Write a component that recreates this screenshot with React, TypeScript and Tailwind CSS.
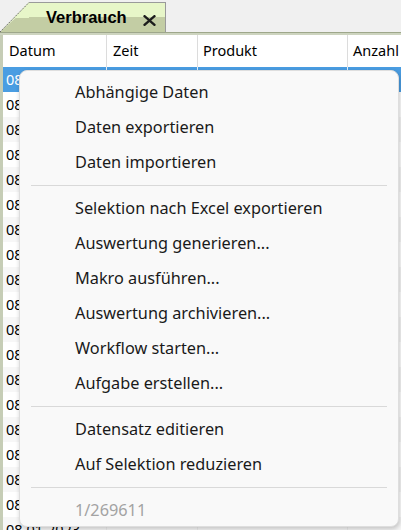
import { Fragment } from 'react'

const COLS = [
  { label: 'Datum', w: 'w-[104px]', pl: 'pl-[6px]' },
  { label: 'Zeit', w: 'w-[91px]', pl: 'pl-[6px]' },
  { label: 'Produkt', w: 'w-[150px]', pl: 'pl-[5px]' },
  { label: 'Anzahl', w: 'w-[80px]', pl: 'pl-[5px]' },
]

// only the date column is filled, the rest sits under the popup anyway
const ROWS = Array.from({ length: 19 }, (_, i) => `08.0${(i % 9) + 1}.2023`)

const MENU: string[][] = [
  ['Abhängige Daten', 'Daten exportieren', 'Daten importieren'],
  [
    'Selektion nach Excel exportieren',
    'Auswertung generieren...',
    'Makro ausführen...',
    'Auswertung archivieren...',
    'Workflow starten...',
    'Aufgabe erstellen...',
  ],
  ['Datensatz editieren', 'Auf Selektion reduzieren'],
]

function Tab() {
  return (
    <div className="flex h-[31px] items-end">
      {/* slanted left flank of the tab */}
      <svg width="29" height="30" viewBox="0 0 29 30" className="block shrink-0">
        <polygon points="0,30 29,0 29,16 15.5,16" fill="#e7f6c8" />
        <polygon points="0,30 15.5,16 29,16 29,30" fill="#c3cda4" />
        <line x1="0" y1="30" x2="29" y2="0.5" stroke="#6b6b6b" strokeWidth="1" strokeDasharray="1.5 1" />
      </svg>
      <div className="flex h-[30px] w-[137px] items-center border-r border-t border-[#9a9a9a] bg-[linear-gradient(#e7f6c8_0,#e7f6c8_50%,#c3cda4_50%,#c3cda4_100%)] pl-[17px]">
        <span className="font-['Liberation_Sans',sans-serif] text-[16.5px] font-bold leading-none text-black">Verbrauch</span>
        <svg width="13" height="11" viewBox="0 0 13 11" className="ml-[16px] mt-[5px]">
          <path d="M1.5 1.2 L11.5 9.8 M11.5 1.2 L1.5 9.8" stroke="#1c1c1c" strokeWidth="2.4" strokeLinecap="round" />
        </svg>
      </div>
    </div>
  )
}

function Grid() {
  return (
    <div className="flex flex-1 flex-col border-l-[3px] border-[#c6cdb6] bg-white">
      <div className="flex h-[32px] shrink-0 bg-white">
        {COLS.map(c => (
          <div key={c.label} className={`${c.w} ${c.pl} flex shrink-0 items-center border-r border-[#dcdcdc] text-black`}>
            {c.label}
          </div>
        ))}
      </div>
      {ROWS.map((datum, i) => (
        <div
          key={i}
          className={`flex h-[25px] shrink-0 ${i === 0 ? 'bg-[#4a9de2] text-white' : i % 2 === 0 ? 'bg-[#f7f7f7] text-black' : 'bg-white text-black'}`}
        >
          {COLS.map((c, j) => (
            <div
              key={c.label}
              className={`${c.w} flex shrink-0 items-center pl-[3px] ${i === 0 ? 'border-r border-[#e6f0fa]' : 'border-r border-[#ececec]'}`}
            >
              {j === 0 ? datum : ''}
            </div>
          ))}
        </div>
      ))}
    </div>
  )
}

function ContextMenu() {
  return (
    <div className="absolute left-[19px] top-[70px] h-[457px] w-[380px] rounded-[8px] border border-[#dedede] bg-[#f9f9f9] pt-[4px] font-['Noto_Sans',sans-serif] text-[16.3px] text-[#1a1a1a] shadow-[1px_2px_5px_rgba(0,0,0,0.22)]">
      {MENU.map((group, gi) => (
        <Fragment key={gi}>
          {group.map(item => (
            <div key={item} className="flex h-[35px] items-center pl-[55px]">
              {item}
            </div>
          ))}
          <div className="flex h-[11px] items-center px-[11px]">
            <div className="h-px w-full bg-[#d9d9d9]" />
          </div>
        </Fragment>
      ))}
      <div className="flex h-[35px] items-center pl-[55px] text-[#a3a3a3]">1/269611</div>
    </div>
  )
}

export default function App() {
  return (
    <div className="relative flex h-[530px] w-[401px] flex-col overflow-hidden bg-[#f0f0f0] font-['Noto_Sans',sans-serif] text-[14.5px]">
      <div className="pt-[1px]">
        <Tab />
      </div>
      <div className="h-[1px] shrink-0 bg-[#9ea78b]" />
      <div className="h-[2px] shrink-0 bg-[#cdd4bf]" />
      <Grid />
      <ContextMenu />
    </div>
  )
}
